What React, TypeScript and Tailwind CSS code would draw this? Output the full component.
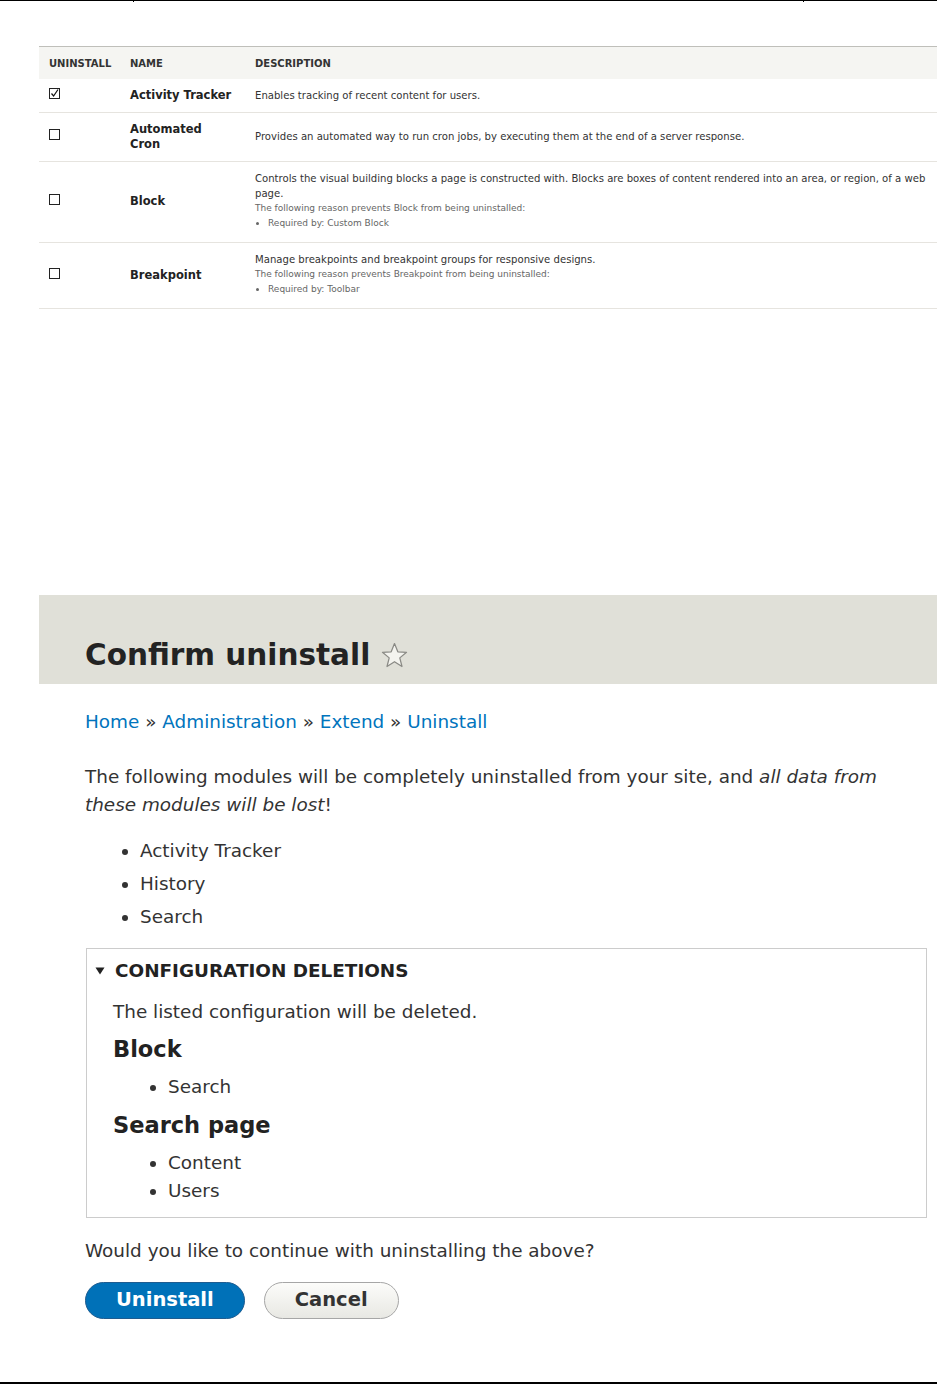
const modules = [
  {
    name: 'Activity Tracker',
    checked: true,
    description: 'Enables tracking of recent content for users.',
    reason: null as null | { text: string; req: string }
  },
  {
    name: 'Automated Cron',
    checked: false,
    description: 'Provides an automated way to run cron jobs, by executing them at the end of a server response.',
    reason: null
  },
  {
    name: 'Block',
    checked: false,
    description:
      'Controls the visual building blocks a page is constructed with. Blocks are boxes of content rendered into an area, or region, of a web page.',
    reason: { text: 'The following reason prevents Block from being uninstalled:', req: 'Required by: Custom Block' }
  },
  {
    name: 'Breakpoint',
    checked: false,
    description: 'Manage breakpoints and breakpoint groups for responsive designs.',
    reason: { text: 'The following reason prevents Breakpoint from being uninstalled:', req: 'Required by: Toolbar' }
  }
];

function Checkbox({ checked }: { checked: boolean }) {
  return (
    <span className="relative mb-[4px] block h-[11px] w-[11px] border border-[#222] bg-white">
      {checked && (
        <svg viewBox="0 0 11 11" className="absolute -left-px -top-px h-[11px] w-[11px]">
          <path d="M2.5 5.5 L4.6 8 L9 1.5" fill="none" stroke="#111" strokeWidth="1.2" />
        </svg>
      )}
    </span>
  );
}

function Star() {
  return (
    <svg viewBox="0 0 26 26" className="h-[27px] w-[27px]">
      <polygon
        points="13,1.5 16.2,9.4 24.6,9.9 18.1,15.3 20.2,23.6 13,19 5.8,23.6 7.9,15.3 1.4,9.9 9.8,9.4"
        fill="#f4f4ef"
        stroke="#8a8a85"
        strokeWidth="1.2"
        strokeLinejoin="round"
      />
    </svg>
  );
}

export default function App() {
  return (
    <div className="relative flex h-[1384px] flex-col overflow-hidden bg-white font-['DejaVu_Sans',sans-serif] text-[#333]">
      <div className="h-px bg-black" />
      <span className="absolute left-[133px] top-0 h-[2px] w-px bg-black" />
      <span className="absolute left-[803px] top-0 h-[2px] w-px bg-black" />

      <table className="ml-[39px] mt-[45px] w-[898px] table-fixed border-collapse leading-[15px]">
        <colgroup>
          <col className="w-[81px]" />
          <col className="w-[125px]" />
          <col />
        </colgroup>
        <thead>
          <tr className="h-[32px] border-t border-[#bfbfba] bg-[#f5f5f2] text-left text-[10px] font-bold uppercase text-[#333]">
            <th className="pl-[10px] pt-[2px] font-bold">Uninstall</th>
            <th className="pl-[10px] pt-[2px] font-bold">Name</th>
            <th className="pl-[10px] pt-[2px] font-bold">Description</th>
          </tr>
        </thead>
        <tbody>
          {modules.map((m) => (
            <tr key={m.name} className="border-b border-[#e6e4df]">
              <td className="py-[9px] pl-[10px] align-middle">
                <Checkbox checked={m.checked} />
              </td>
              <td className="py-[9px] pl-[10px] pr-[12px] align-middle text-[11.5px] font-bold leading-[15px] text-[#222]">
                {m.name}
              </td>
              <td className="py-[9px] pl-[10px] pr-[8px] align-middle text-[10.1px] leading-[15px] text-[#333]">
                <div>{m.description}</div>
                {m.reason && (
                  <div className="mb-[2px] text-[9px] leading-[15px] text-[#666]">
                    <div>{m.reason.text}</div>
                    <ul className="list-disc pl-[13px]">
                      <li>{m.reason.req}</li>
                    </ul>
                  </div>
                )}
              </td>
            </tr>
          ))}
        </tbody>
      </table>

      <div className="ml-[39px] mt-[286px] h-[89px] bg-[#e0e0d8] pl-[46px] pt-[43px]">
        <h1 className="flex items-center gap-[11px] text-[29.5px] font-bold leading-[35px] text-[#232323]">
          Confirm uninstall
          <Star />
        </h1>
      </div>

      <div className="pl-[85px] pr-[10px] text-[18.4px] leading-[28px]">
        <nav className="mt-[24px] text-[#0074bd]">
          <a href="#">Home</a> <span className="text-[#333]">»</span> <a href="#">Administration</a>{' '}
          <span className="text-[#333]">»</span> <a href="#">Extend</a> <span className="text-[#333]">»</span>{' '}
          <a href="#">Uninstall</a>
        </nav>

        <p className="mt-[27px] pr-[40px]">
          The following modules will be completely uninstalled from your site, and{' '}
          <em>all data from these modules will be lost</em>!
        </p>

        <ul className="mt-[18px] list-disc space-y-[5px] pl-[55px]">
          <li>Activity Tracker</li>
          <li>History</li>
          <li>Search</li>
        </ul>

        <div className="ml-px mt-[17px] border border-[#ccc] pb-[12px]">
          <div className="flex items-center gap-[10px] pl-[8px] pt-[8px] font-bold uppercase text-[#222]">
            <svg viewBox="0 0 10 8" className="h-[8px] w-[10px]">
              <polygon points="0.5,0.5 9.5,0.5 5,7.5" fill="#222" />
            </svg>
            Configuration deletions
          </div>
          <div className="pl-[26px]">
            <p className="mt-[13px]">The listed configuration will be deleted.</p>
            <h3 className="mt-[8px] text-[22.5px] font-bold leading-[30px] text-[#222]">Block</h3>
            <ul className="mt-[9px] list-disc pl-[55px]">
              <li>Search</li>
            </ul>
            <h3 className="mt-[9px] text-[22.5px] font-bold leading-[30px] text-[#222]">Search page</h3>
            <ul className="mt-[9px] list-disc pl-[55px]">
              <li>Content</li>
              <li>Users</li>
            </ul>
          </div>
        </div>

        <p className="mt-[19px]">Would you like to continue with uninstalling the above?</p>

        <div className="mt-[17px] flex gap-[19px]">
          <button className="h-[37px] rounded-full border border-[#1e5c90] bg-[#0071b8] px-[30px] text-[19.5px] font-bold text-white">
            Uninstall
          </button>
          <button className="h-[37px] rounded-full border border-[#a6a6a6] bg-gradient-to-b from-[#fcfcfa] to-[#e8e8e3] px-[30px] text-[19.5px] font-bold text-[#333]">
            Cancel
          </button>
        </div>
      </div>

      <div className="mt-auto h-[2px] bg-black" />
    </div>
  );
}
